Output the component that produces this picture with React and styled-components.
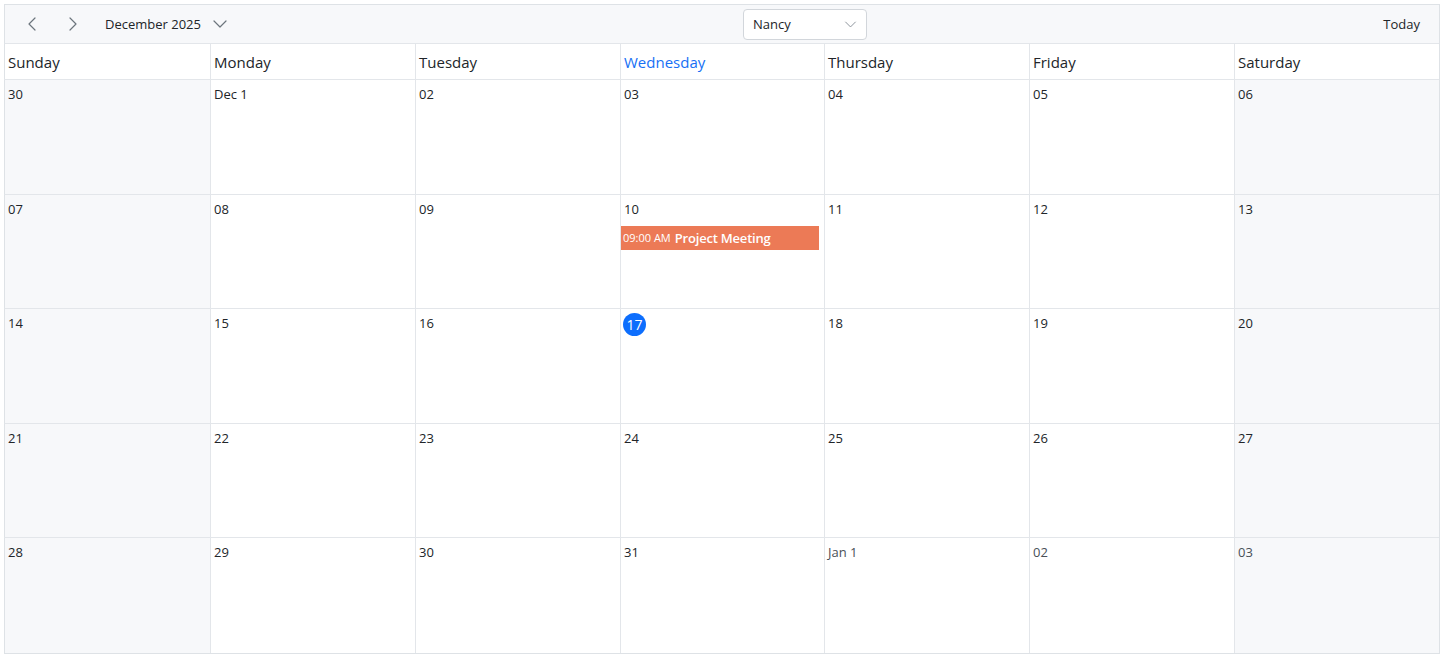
import { createGlobalStyle, styled } from 'styled-components'

const GlobalStyle = createGlobalStyle`
  html, body {
    margin: 0;
    padding: 0;
    background: #ffffff;
  }

  body {
    font-family: "Segoe UI", "Open Sans", "Noto Sans", sans-serif;
    color: #212529;
  }

  #root {
    padding: 4px;
  }
`

// column widths as the reference rounds them (1435px over 7 days)
const COLUMNS = '206px 205px 205px 204px 205px 205px 1fr'

const Calendar = styled.div`
  width: 1436px;
  height: 650px;
  box-sizing: border-box;
  border: 1px solid #dee2e6;
  border-left: none;
  display: flex;
  flex-direction: column;
`

const Toolbar = styled.div`
  height: 38px;
  flex: none;
  background: #f7f8fa;
  border-left: 1px solid #dee2e6;
  border-bottom: 1px solid #e3e6ea;
  display: grid;
  grid-template-columns: 729px 124px 1fr;
  align-items: center;
  padding: 0 19px 0 9px;
`

const ToolbarLeft = styled.div`
  display: flex;
  align-items: center;
  gap: 1px;
`

const IconButton = styled.button`
  width: 38px;
  height: 30px;
  border: none;
  background: transparent;
  display: flex;
  align-items: center;
  justify-content: center;
  padding: 0;
  color: #6c757d;
  cursor: pointer;
`

const MonthButton = styled.button`
  border: none;
  background: transparent;
  display: flex;
  align-items: center;
  gap: 11px;
  margin-left: 13px;
  padding: 0;
  font-family: inherit;
  font-size: 13px;
  color: #212529;
  cursor: pointer;

  svg {
    color: #6c757d;
  }
`

const Select = styled.div`
  width: 124px;
  height: 31px;
  box-sizing: border-box;
  background: #ffffff;
  border: 1px solid #d2d6db;
  border-radius: 4px;
  display: flex;
  align-items: center;
  justify-content: space-between;
  padding: 0 9px;
  font-size: 13px;
  color: #212529;

  svg {
    color: #8a9199;
  }
`

const TodayButton = styled.button`
  justify-self: end;
  border: none;
  background: transparent;
  font-family: inherit;
  font-size: 13px;
  color: #212529;
  padding: 0;
  cursor: pointer;
`

const HeaderRow = styled.div`
  height: 35px;
  flex: none;
  display: grid;
  grid-template-columns: ${COLUMNS};
  border-bottom: 1px solid #e3e6ea;
`

const HeaderCell = styled.div`
  display: flex;
  align-items: center;
  padding-left: 3px;
  font-size: 15px;
  color: ${({ $active }) => ($active ? '#1670f5' : '#212529')};
  border-left: 1px solid #e3e6ea;

  &:first-child {
    border-left-color: #dee2e6;
  }
`

const MonthGrid = styled.div`
  flex: 1;
  display: grid;
  grid-template-columns: ${COLUMNS};
  grid-template-rows: repeat(5, 1fr);
`

const DayCell = styled.div`
  background: ${({ $weekend }) => ($weekend ? '#f7f8fa' : '#ffffff')};
  border-left: 1px solid #e3e6ea;
  border-bottom: 1px solid #e3e6ea;
  padding: 5px 0 0 0;
  min-width: 0;

  &:nth-child(7n + 1) {
    border-left-color: #dee2e6;
  }

  &:nth-last-child(-n + 7) {
    border-bottom: none;
  }
`

const DateLabel = styled.div`
  height: 18px;
  display: flex;
  align-items: center;
  padding-left: 3px;
  font-size: 13px;
  color: ${({ $muted }) => ($muted ? '#495057' : '#212529')};
`

const TodayBadge = styled.span`
  width: 23px;
  height: 23px;
  flex: none;
  border-radius: 50%;
  background: #0d6efd;
  color: #ffffff;
  font-size: 14px;
  display: inline-flex;
  align-items: center;
  justify-content: center;
  margin-left: -1px;
  margin-top: 2px;
`

const Event = styled.div`
  margin: 8px 5px 0 0;
  height: 24px;
  background: #ec7a56;
  color: #ffffff;
  display: flex;
  align-items: center;
  gap: 4px;
  padding-left: 2px;
  white-space: nowrap;
  overflow: hidden;
`

const EventTime = styled.span`
  font-size: 11px;
`

const EventTitle = styled.span`
  font-size: 13px;
  font-weight: 600;
  letter-spacing: -0.2px;
`

const Chevron = ({ dir = 'right', size = 16 }) => {
  const paths = {
    left: 'M10 2 L4 8 L10 14',
    right: 'M6 2 L12 8 L6 14',
    down: 'M2 5 L8 11 L14 5'
  }
  return (
    <svg width={size} height={size} viewBox='0 0 16 16' fill='none'>
      <path d={paths[dir]} stroke='currentColor' strokeWidth='1.2' strokeLinecap='round' strokeLinejoin='round' />
    </svg>
  )
}

const days = ['Sunday', 'Monday', 'Tuesday', 'Wednesday', 'Thursday', 'Friday', 'Saturday']

function buildCells () {
  const cells = []
  cells.push({ label: '30', muted: false })
  for (let d = 1; d <= 31; d++) {
    cells.push({ label: d === 1 ? 'Dec 1' : String(d).padStart(2, '0'), day: d })
  }
  cells.push({ label: 'Jan 1', muted: true })
  cells.push({ label: '02', muted: true })
  cells.push({ label: '03', muted: true })
  return cells
}

export default function App () {
  const cells = buildCells()

  return (
    <>
      <GlobalStyle />
      <Calendar>
        <Toolbar>
          <ToolbarLeft>
            <IconButton aria-label='Previous'>
              <Chevron dir='left' />
            </IconButton>
            <IconButton aria-label='Next'>
              <Chevron dir='right' />
            </IconButton>
            <MonthButton>
              December 2025
              <Chevron dir='down' />
            </MonthButton>
          </ToolbarLeft>
          <Select>
            Nancy
            <Chevron dir='down' size={13} />
          </Select>
          <TodayButton>Today</TodayButton>
        </Toolbar>

        <HeaderRow>
          {days.map((name) => (
            <HeaderCell key={name} $active={name === 'Wednesday'}>{name}</HeaderCell>
          ))}
        </HeaderRow>

        <MonthGrid>
          {cells.map((cell, i) => {
            const col = i % 7
            const weekend = col === 0 || col === 6
            return (
              <DayCell key={i} $weekend={weekend}>
                <DateLabel $muted={cell.muted}>
                  {cell.day === 17 ? <TodayBadge>17</TodayBadge> : cell.label}
                </DateLabel>
                {cell.day === 10 && (
                  <Event>
                    <EventTime>09:00 AM</EventTime>
                    <EventTitle>Project Meeting</EventTitle>
                  </Event>
                )}
              </DayCell>
            )
          })}
        </MonthGrid>
      </Calendar>
    </>
  )
}
